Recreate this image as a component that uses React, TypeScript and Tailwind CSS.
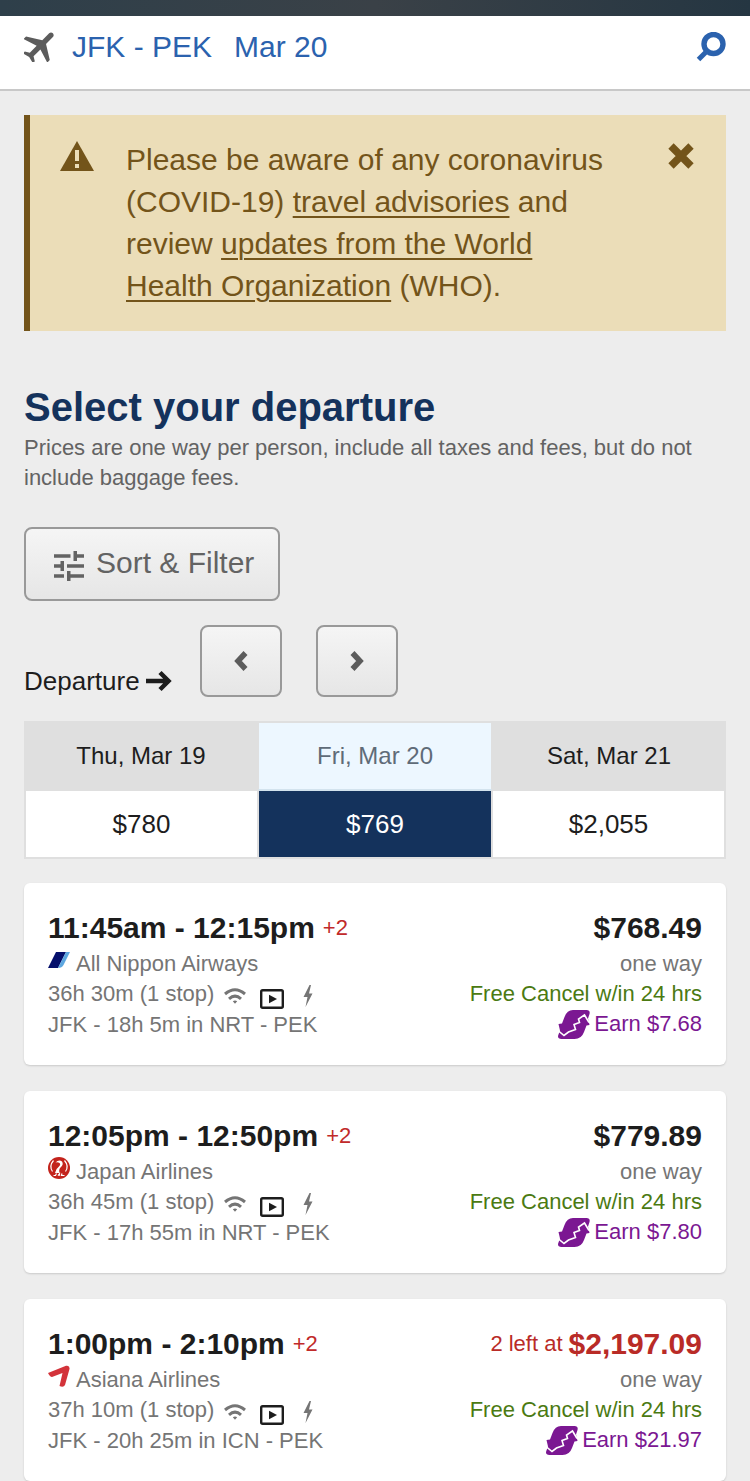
import React, {useState} from "react";

type Day = {
    date: string;
    price: string;
};

type Flight = {
    times: string;
    airline: string;
    logo: React.ReactNode;
    duration: string;
    route: string;
    price: string;
    seatsLeft?: string;
    earn: string;
};

// Icons
const PlaneIcon = () => (
    <svg className="w-[30px] h-[30px] shrink-0" viewBox="-9.3 -7.8 17 17" fill="currentColor" aria-hidden="true">
        <path
            transform="rotate(45) translate(-11.5 -12)"
            d="M21 16v-2l-8-5V3.5c0-.83-.67-1.5-1.5-1.5S10 2.67 10 3.500V9l-8 5v2l8-2.500V19l-2.500 1.500V22l4-1 4 1v-1.500L13 19v-5.500l8 2.500z"
        />
    </svg>
);

const SearchIcon = () => (
    <svg className="w-[30px] h-[30px]" viewBox="0 0 30 30" fill="none" stroke="currentColor" strokeWidth="5.400" aria-hidden="true">
        <circle cx="17.500" cy="12" r="9.500" />
        <path d="M11.500 18.500 2.500 27.500" strokeWidth="5" />
    </svg>
);

const WarningIcon = () => (
    <svg className="w-[34px] h-[30px] shrink-0" viewBox="0 0 34 30" aria-hidden="true">
        <path fill="currentColor" d="M17 0 34 30H0z" />
        <path fill="#ebddb8" d="M15 9h4v11h-4zM15 23h4v4h-4z" />
    </svg>
);

const CloseIcon = () => (
    <svg className="w-[26px] h-[26px]" viewBox="0 0 26 26" stroke="currentColor" strokeWidth="7.500" aria-hidden="true">
        <path d="M3 3 23 23M23 3 3 23" />
    </svg>
);

const FilterIcon = () => (
    <svg className="w-[30px] h-[30px] shrink-0" viewBox="0 0 30 30" fill="currentColor" aria-hidden="true">
        <path d="M0 3.200h16.500v3.600H0zM19.500 0H23v3.200h7v3.600h-7V10h-3.500zM0 13.200h6.500V10H10v10H6.500v-3.200H0zM13 13.200h17v3.600H13zM0 23.200h10v3.600H0zM13 20h3.500v3.200H30v3.600H16.500V30H13z" />
    </svg>
);

const ArrowIcon = () => (
    <svg className="w-[26px] h-[22px]" viewBox="0 0 26 22" fill="none" stroke="currentColor" strokeWidth="4.500" aria-hidden="true">
        <path d="M0 11h22M14 2.500 22.500 11 14 19.500" />
    </svg>
);

const ChevronIcon = ({flip = false}: {flip?: boolean}) => (
    <svg className="w-[14px] h-[22px]" viewBox="0 0 14 22" fill="none" stroke="currentColor" strokeWidth="5.500" aria-hidden="true">
        <path d={flip ? "M2.500 3 10 11 2.500 19" : "M11.500 3 4 11 11.500 19"} />
    </svg>
);

const WifiIcon = () => (
    <svg className="w-[22px] h-4" viewBox="0 0 22 16" fill="none" stroke="currentColor" strokeWidth="3" aria-hidden="true">
        <path d="M1 6Q11-2.500 21 6M5 10.800Q11 5.500 17 10.800" />
        <path d="m8.800 13.200 2.200 2.600 2.200-2.600q-2.200-1.500-4.400 0z" fill="currentColor" stroke="none" />
    </svg>
);

const VideoIcon = () => (
    <svg className="w-6 h-5 text-[#1d1d1d]" viewBox="0 0 24 20" aria-hidden="true">
        <rect x="1.200" y="1.200" width="21.600" height="17.600" rx="1.500" fill="none" stroke="currentColor" strokeWidth="2.400" />
        <path d="M9 5.800v8.400l8-4.200z" fill="currentColor" />
    </svg>
);

const BoltIcon = () => (
    <svg className="w-3 h-[22px]" viewBox="0 0 12 22" fill="currentColor" aria-hidden="true">
        <path d="M7.500 0 1.500 12h4L3.500 22 10.500 8.500H7L9 0z" />
    </svg>
);

const RewardsIcon = () => (
    <svg className="w-8 h-[29px]" viewBox="0 0 32 29" aria-hidden="true">
        <path
            fill="#7b1792"
            d="M15 0h13.500q4 0 3 4L30 8.500l1.500 6.500-3 .5-2.500 6.500Q23.500 29 16.500 29H3.500q-4.500 0-3.200-4L2 20.500.5 14l3.500-.5L6.500 7Q9 0 15 0z"
        />
        <path fill="none" stroke="#fff" strokeWidth="1.600" d="M0 20.500 6 25.500 10.500 22 17.500 19.500 16 14.500 21.500 12.500 20.500 9 26.500 5 31 12.500" />
    </svg>
);

// Airline logos
const AnaLogo = () => (
    <svg className="w-[22px] h-[22px]" viewBox="0 0 22 22" aria-hidden="true">
        <path fill="#040f6b" d="M8 3h10L10 19H0z" />
        <path fill="#5da7e0" d="M18 3h4l-6.500 13q-1.500 3-5.500 3z" />
    </svg>
);

const JalLogo = () => (
    <svg className="w-[22px] h-[22px]" viewBox="0 0 22 22" aria-hidden="true">
        <circle cx="11" cy="11" r="11" fill="#c3231c" />
        <path fill="none" stroke="#fff" strokeWidth="1.200" d="M5.500 3.500Q.8 9 4.500 14.500M16.500 3.500q4.700 5.500 1 11" />
        <path fill="#fff" d="M7.500 5.500Q11 2 14 4.500q2 3-1.500 6-2 2-1 5.500H7q1-4.500 4-6.500 2-2 .5-3.500Q10 5 7.500 5.500z" />
        <path fill="none" stroke="#fff" strokeWidth="1.200" d="M5.500 18.500h2l1-2M10 18.700l1.500-2v2M14 16.500l-.5 2h3" />
    </svg>
);

const AsianaLogo = () => (
    <svg className="w-[22px] h-[22px]" viewBox="0 0 22 22" aria-hidden="true">
        <path fill="#d3333a" d="M0 8 18 .8Q22 0 21.500 4L17 20q-1.500 3-5.500 1l3-13L4 12Q2 12 0 8z" />
    </svg>
);

const days: Day[] = [
    {date: "Thu, Mar 19", price: "$780"},
    {date: "Fri, Mar 20", price: "$769"},
    {date: "Sat, Mar 21", price: "$2,055"},
];

const flights: Flight[] = [
    {
        times: "11:45am - 12:15pm",
        airline: "All Nippon Airways",
        logo: <AnaLogo />,
        duration: "36h 30m (1 stop)",
        route: "JFK - 18h 5m in NRT - PEK",
        price: "$768.49",
        earn: "Earn $7.68",
    },
    {
        times: "12:05pm - 12:50pm",
        airline: "Japan Airlines",
        logo: <JalLogo />,
        duration: "36h 45m (1 stop)",
        route: "JFK - 17h 55m in NRT - PEK",
        price: "$779.89",
        earn: "Earn $7.80",
    },
    {
        times: "1:00pm - 2:10pm",
        airline: "Asiana Airlines",
        logo: <AsianaLogo />,
        duration: "37h 10m (1 stop)",
        route: "JFK - 20h 25m in ICN - PEK",
        price: "$2,197.09",
        seatsLeft: "2 left at",
        earn: "Earn $21.97",
    },
];

const FlightCard = ({flight}: {flight: Flight}) => (
    <li className="flex justify-between rounded-md bg-white p-6 text-[22px] leading-[30px] text-[#757575] shadow-[0_1px_2px_rgba(0,0,0,0.15)]">
        <div>
            <h2 className="flex items-center gap-2 leading-[42px]">
                <span className="text-[30px] font-bold text-[#1d1d1d]">{flight.times}</span>
                <span className="text-[#c12a2a]">+2</span>
            </h2>
            <div className="flex gap-1.5">
                {flight.logo}
                <span>{flight.airline}</span>
            </div>
            <div className="flex h-[30px] items-center">
                <span className="mr-2.5">{flight.duration}</span>
                <span className="flex items-center gap-3.5 pt-1">
                    <WifiIcon />
                    <span className="pt-1.5">
                        <VideoIcon />
                    </span>
                    <span className="ml-1">
                        <BoltIcon />
                    </span>
                </span>
            </div>
            <div className="leading-8">{flight.route}</div>
        </div>
        <div className="flex flex-col items-end">
            <div className={`flex items-center gap-1.5 leading-[42px] ${flight.seatsLeft ? "text-[#b92b27]" : "text-[#1d1d1d]"}`}>
                {flight.seatsLeft && <span>{flight.seatsLeft}</span>}
                <span className="text-[30px] font-bold">{flight.price}</span>
            </div>
            <div>one way</div>
            <div className="text-[#4b7a12]">Free Cancel w/in 24 hrs</div>
            <div className="flex items-center gap-1 text-[#7b1792]">
                <RewardsIcon />
                <span>{flight.earn}</span>
            </div>
        </div>
    </li>
);

const App: React.FC = () => {
    const [showAlert, setShowAlert] = useState(true);
    const [selected, setSelected] = useState(1);

    const navButton =
        "flex h-[72px] w-[82px] items-center justify-center rounded-lg border-2 border-[#999] bg-linear-to-b from-[#f5f5f5] to-[#e6e6e6] text-[#5c5c5c]";

    return (
        <div className="min-h-screen bg-[#ededed] font-['Liberation_Sans',Arial,sans-serif] text-[#1d1d1d]">
            <div className="h-4 bg-linear-to-r from-[#2e3f4a] via-[#3a4147] to-[#253642]" />
            <header className="flex items-center justify-between border-b-2 border-[#c8c8c8] bg-white px-6 pt-2.5 pb-[21px]">
                <a href="#search" className="flex items-center gap-[18px] text-[30px] leading-[42px] text-[#2b62ae]">
                    <span className="text-[#5c5c5c]">
                        <PlaneIcon />
                    </span>
                    <span>JFK - PEK</span>
                    <span className="ml-1">Mar 20</span>
                </a>
                <button type="button" aria-label="Search" className="text-[#2b62ae]">
                    <SearchIcon />
                </button>
            </header>

            <main className="px-6 pt-6">
                {showAlert && (
                    <section className="mb-14 flex items-start border-l-[6px] border-[#73541a] bg-[#ebddb8] py-6 pr-8 pl-[30px] text-[#73541a]">
                        <span className="pt-0.5">
                            <WarningIcon />
                        </span>
                        <p className="mr-14 ml-8 flex-1 text-[30px] leading-[42px]">
                            Please be aware of any coronavirus (COVID-19){" "}
                            <a href="#advisories" className="underline decoration-2 underline-offset-4">travel advisories</a> and review{" "}
                            <a href="#who" className="underline decoration-2 underline-offset-4">updates from the World Health Organization</a> (WHO).
                        </p>
                        <button type="button" aria-label="Close" className="pt-1" onClick={() => setShowAlert(false)}>
                            <CloseIcon />
                        </button>
                    </section>
                )}

                <h1 className="mb-1.5 text-[40px] leading-10 font-bold text-[#14325c]">Select your departure</h1>
                <p className="text-[22px] leading-[30px] text-[#636363]">
                    Prices are one way per person, include all taxes and fees, but do not include baggage fees.
                </p>

                <button
                    type="button"
                    className="mt-[34px] flex h-[74px] items-center gap-3 rounded-lg border-2 border-[#999] bg-linear-to-b from-[#f5f5f5] to-[#e6e6e6] pr-6 pl-7 text-[30px] text-[#636363]"
                >
                    <span className="pt-1">
                        <FilterIcon />
                    </span>
                    <span className="pb-1">Sort &amp; Filter</span>
                </button>

                <div className="mt-6 flex items-end">
                    <div className="mr-7 flex items-center gap-1.5 text-[26px] leading-8">
                        Departure
                        <ArrowIcon />
                    </div>
                    <button type="button" aria-label="Earlier dates" className={navButton} onClick={() => setSelected(Math.max(selected - 1, 0))}>
                        <ChevronIcon />
                    </button>
                    <button type="button" aria-label="Later dates" className={`ml-[34px] ${navButton}`} onClick={() => setSelected(Math.min(selected + 1, 2))}>
                        <ChevronIcon flip />
                    </button>
                </div>

                <table className="mt-6 w-full table-fixed border-separate border-spacing-0 border-t-2 border-[#dfdfdf] text-center">
                    <thead>
                        <tr>
                            {days.map((day, i) => (
                                <th
                                    key={day.date}
                                    scope="col"
                                    className={`h-[66px] border-x border-[#dfdfdf] text-2xl font-normal ${i === selected ? "bg-[#edf7ff] text-[#5f6b78]" : "bg-[#dfdfdf]"}`}
                                >
                                    {day.date}
                                </th>
                            ))}
                        </tr>
                    </thead>
                    <tbody>
                        <tr>
                            {days.map((day, i) => (
                                <td
                                    key={day.date}
                                    className={`h-[70px] border-x border-y-2 border-[#dfdfdf] text-[26px] first:border-l-2 last:border-r-2 ${i === selected ? "border-t-[#d3e3ee] bg-[#14325c] text-white" : "bg-white"}`}
                                >
                                    {day.price}
                                </td>
                            ))}
                        </tr>
                    </tbody>
                </table>

                <ul className="mt-6 flex flex-col gap-[26px]">
                    {flights.map(flight => (
                        <FlightCard key={flight.times} flight={flight} />
                    ))}
                </ul>
            </main>
        </div>
    );
};

export default App;
